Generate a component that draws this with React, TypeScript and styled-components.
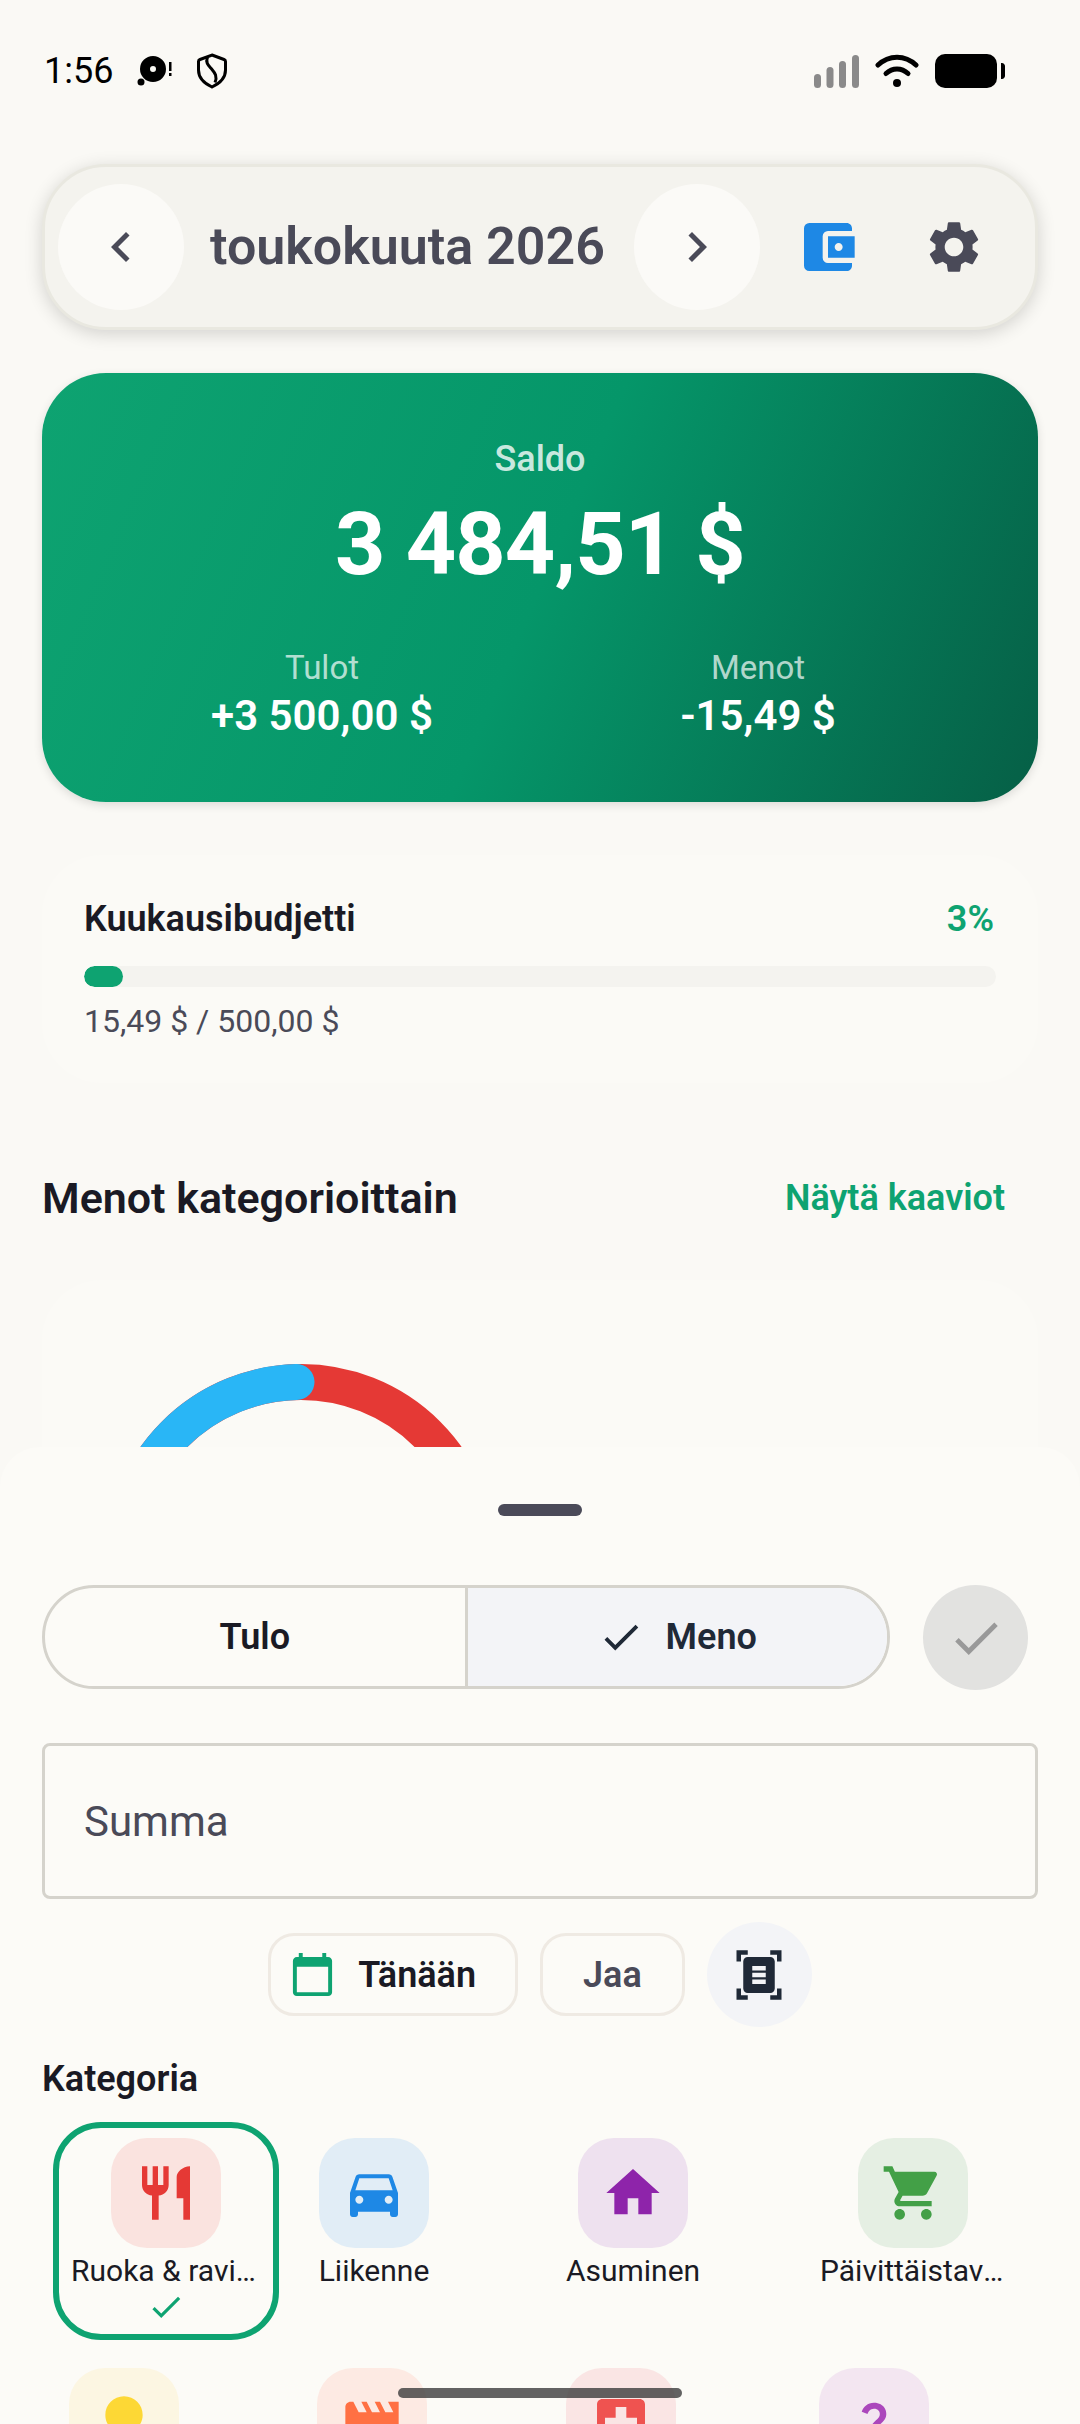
import styled, { createGlobalStyle } from 'styled-components';
import type { IconType } from 'react-icons';
import {
  MdAccountBalanceWallet,
  MdCalendarToday,
  MdCheck,
  MdChevronLeft,
  MdChevronRight,
  MdDirectionsCar,
  MdDocumentScanner,
  MdHome,
  MdLightbulb,
  MdLocalHospital,
  MdMovie,
  MdQuestionMark,
  MdRestaurant,
  MdSettings,
  MdShoppingCart,
} from 'react-icons/md';

type Category = {
  label?: string,
  icon: IconType,
  iconSize?: number,
  color: string,
  tint: string,
  width: number,
  offset: number,
  selected?: boolean,
}

const firstRow: Category[] = [
  {
    label: 'Ruoka & ravintolat', icon: MdRestaurant, color: '#e53935', tint: '#fae3df', width: 226, offset: 11, selected: true,
  },
  {
    label: 'Liikenne', icon: MdDirectionsCar, color: '#1e88e5', tint: '#e1edf6', width: 150, offset: 20,
  },
  {
    label: 'Asuminen', icon: MdHome, color: '#8e24aa', tint: '#eee1ef', width: 172, offset: 98,
  },
  {
    label: 'Päivittäistavarat', icon: MdShoppingCart, color: '#43a047', tint: '#e5efe3', width: 222, offset: 83,
  },
];

const secondRow: Category[] = [
  {
    icon: MdLightbulb, color: '#fdd835', tint: '#fcf6e2', width: 150, offset: 7,
  },
  {
    icon: MdMovie, color: '#ff7043', tint: '#fdeae3', width: 150, offset: 98,
  },
  {
    icon: MdLocalHospital, color: '#ef5350', tint: '#fae5e4', width: 150, offset: 99,
  },
  {
    icon: MdQuestionMark, iconSize: 54, color: '#ab47bc', tint: '#f3e6f1', width: 150, offset: 103,
  },
];

const GlobalStyle = createGlobalStyle`
  * {
    box-sizing: border-box;
  }
  html, body {
    margin: 0;
    padding: 0;
    background: #faf9f5;
  }
  body {
    font-family: Roboto, "Liberation Sans", sans-serif;
  }
`;

const StyledScreen = styled.div`
  position: relative;
  width: 1080px;
  height: 2424px;
  overflow: hidden;
  background: #faf9f5;
  color: #1a1a24;
`;

const StyledContent = styled.div`
  display: flex;
  flex-direction: column;
  padding: 0 42px;
`;

const StyledStatusBar = styled.div`
  display: flex;
  align-items: center;
  justify-content: space-between;
  height: 142px;
  padding: 0 33px 0 2px;
  color: #000;
`;

const StyledStatusGroup = styled.div<{ $gap: number }>`
  display: flex;
  align-items: center;
  gap: ${(props) => props.$gap}px;
`;

const StyledTime = styled.span`
  font-size: 36px;
  line-height: 40px;
`;

const StyledHeader = styled.div`
  display: flex;
  align-items: center;
  height: 166px;
  margin-top: 22px;
  padding: 0 21px 0 13px;
  background: #f4f3ee;
  border: 3px solid #e9e8e0;
  border-radius: 64px;
  box-shadow: 0 4px 18px rgba(0, 0, 0, 0.16);
`;

const StyledNavButton = styled.button`
  display: flex;
  align-items: center;
  justify-content: center;
  flex: none;
  width: 126px;
  height: 126px;
  padding: 0;
  border: none;
  border-radius: 50%;
  background: #fbfaf7;
  color: #4a4a58;
`;

const StyledMonth = styled.h1`
  flex: 1;
  margin: 0;
  padding-right: 3px;
  text-align: center;
  font-size: 52px;
  line-height: 60px;
  font-weight: 600;
  color: #4a4a58;
  white-space: nowrap;
`;

const StyledIconButton = styled.button<{ $color: string }>`
  display: flex;
  align-items: center;
  justify-content: center;
  flex: none;
  width: 120px;
  height: 120px;
  padding: 0;
  border: none;
  background: none;
  color: ${(props) => props.$color};
`;

const StyledHeaderActions = styled.div`
  display: flex;
  gap: 6px;
  margin-left: 8px;
`;

const StyledBalanceCard = styled.section`
  height: 429px;
  margin-top: 43px;
  padding-top: 64px;
  border-radius: 64px;
  background: linear-gradient(113deg, #0ea371 0%, #059669 50%, #065f46 100%);
  box-shadow: 0 3px 10px rgba(0, 0, 0, 0.12);
  color: #fff;
  text-align: center;
`;

const StyledBalanceLabel = styled.div`
  font-size: 36px;
  line-height: 44px;
  font-weight: 500;
  color: rgba(255, 255, 255, 0.8);
`;

const StyledBalanceAmount = styled.div`
  margin-top: 13px;
  font-size: 88px;
  line-height: 100px;
  font-weight: 700;
  letter-spacing: -0.9px;
`;

const StyledTotals = styled.div`
  display: grid;
  grid-template-columns: 436px 436px;
  justify-content: center;
  margin-top: 56px;
`;

const StyledTotalLabel = styled.div`
  font-size: 33px;
  line-height: 36px;
  color: rgba(255, 255, 255, 0.7);
`;

const StyledTotalValue = styled.div`
  margin-top: 6px;
  font-size: 42px;
  line-height: 48px;
  font-weight: 600;
`;

const StyledBudgetCard = styled.section`
  height: 228px;
  margin-top: 53px;
  padding: 43px 42px 0;
  border-radius: 60px;
  background: #fbfaf6;
`;

const StyledBudgetHead = styled.div`
  display: flex;
  justify-content: space-between;
  padding-right: 2px;
  font-size: 36px;
  line-height: 42px;
  font-weight: 600;
`;

const StyledPercent = styled.span`
  color: #0ea371;
`;

const StyledTrack = styled.div`
  height: 21px;
  margin-top: 26px;
  border-radius: 11px;
  background: #f4f3ef;
  overflow: hidden;
`;

const StyledFill = styled.div`
  height: 100%;
  border-radius: 11px;
  background: #0ea371;
`;

const StyledBudgetText = styled.div`
  margin-top: 16px;
  font-size: 32px;
  line-height: 36px;
  color: #4a4a58;
`;

const StyledSectionHead = styled.div`
  display: flex;
  align-items: center;
  justify-content: space-between;
  height: 48px;
  margin-top: 91px;
  padding-right: 33px;
`;

const StyledSectionTitle = styled.h2`
  margin: 0;
  font-size: 43px;
  font-weight: 600;
`;

const StyledLink = styled.span`
  font-size: 36px;
  font-weight: 600;
  color: #0ea371;
`;

const StyledChartCard = styled.section`
  height: 400px;
  margin-top: 58px;
  padding: 84px 0 0 62px;
  border-radius: 60px;
  background: #fbfaf6;
`;

const StyledSheet = styled.div`
  position: absolute;
  top: 1447px;
  left: 0;
  right: 0;
  bottom: 0;
  padding: 57px 42px 0;
  border-radius: 40px 40px 0 0;
  background: #fcfbf7;
  overflow: hidden;
`;

const StyledHandle = styled.div`
  width: 84px;
  height: 12px;
  margin: 0 auto;
  border-radius: 6px;
  background: #4a4a58;
`;

const StyledTypeRow = styled.div`
  display: flex;
  gap: 33px;
  margin-top: 69px;
`;

const StyledSegmented = styled.div`
  display: flex;
  width: 848px;
  height: 104px;
  border: 3px solid #d5d3cc;
  border-radius: 52px;
  overflow: hidden;
`;

const StyledSegment = styled.button<{ $active?: boolean }>`
  display: flex;
  align-items: center;
  justify-content: center;
  gap: 22px;
  flex: 1;
  padding: 0;
  border: none;
  border-left: ${(props) => (props.$active ? '3px solid #d5d3cc' : 'none')};
  background: ${(props) => (props.$active ? '#f3f4f7' : 'transparent')};
  color: ${(props) => (props.$active ? '#1f2937' : '#1a1a24')};
  font-family: inherit;
  font-size: 36px;
  font-weight: 600;
`;

const StyledConfirm = styled.button`
  display: flex;
  align-items: center;
  justify-content: center;
  width: 105px;
  height: 105px;
  padding: 0;
  border: none;
  border-radius: 50%;
  background: #e2e2e0;
  color: #999;
`;

const StyledAmountInput = styled.input`
  display: block;
  width: 100%;
  height: 156px;
  margin-top: 53px;
  padding: 0 39px;
  border: 3px solid #d5d3cc;
  border-radius: 8px;
  background: transparent;
  font-family: inherit;
  font-size: 42px;
  &::placeholder {
    color: #4a4a58;
    opacity: 1;
  }
`;

const StyledChips = styled.div`
  display: flex;
  align-items: center;
  justify-content: center;
  gap: 22px;
  height: 105px;
  margin-top: 23px;
`;

const StyledChip = styled.button<{ $muted?: boolean }>`
  display: flex;
  align-items: center;
  justify-content: center;
  gap: 22px;
  height: 83px;
  padding: ${(props) => (props.$muted ? '0 40px' : '0 39px 0 18px')};
  border: 3px solid #efeae3;
  border-radius: 26px;
  background: transparent;
  color: ${(props) => (props.$muted ? '#4a4a58' : '#1a1a24')};
  font-family: inherit;
  font-size: 36px;
  font-weight: 600;
  svg {
    color: #0ea371;
  }
`;

const StyledScanButton = styled.button`
  display: flex;
  align-items: center;
  justify-content: center;
  width: 105px;
  height: 105px;
  padding: 0;
  border: none;
  border-radius: 50%;
  background: #f3f4f7;
  color: #1f2937;
`;

const StyledCategoryTitle = styled.h3`
  margin: 30px 0 0;
  font-size: 36px;
  line-height: 44px;
  font-weight: 600;
`;

const StyledCategoryRow = styled.div<{ $top: number }>`
  display: flex;
  align-items: flex-start;
  margin-top: ${(props) => props.$top}px;
`;

const StyledCategory = styled.div<{ $width: number, $offset: number, $selected?: boolean }>`
  display: flex;
  flex-direction: column;
  align-items: center;
  flex: none;
  width: ${(props) => props.$width}px;
  margin-left: ${(props) => props.$offset}px;
  padding: 10px 12px 8px;
  border: 6px solid ${(props) => (props.$selected ? '#0ea371' : 'transparent')};
  border-radius: 48px;
  color: #0ea371;
`;

const StyledCategoryIcon = styled.div<{ $tint: string, $color: string }>`
  display: flex;
  align-items: center;
  justify-content: center;
  width: 110px;
  height: 110px;
  border-radius: 36px;
  background: ${(props) => props.$tint};
  color: ${(props) => props.$color};
`;

const StyledCategoryLabel = styled.div`
  width: 100%;
  margin-top: 6px;
  font-size: 30px;
  line-height: 34px;
  font-weight: 400;
  color: #1a1a24;
  text-align: center;
  white-space: nowrap;
  overflow: hidden;
  text-overflow: ellipsis;
`;

const StyledHomeBar = styled.div`
  position: absolute;
  left: 398px;
  bottom: 26px;
  width: 284px;
  height: 10px;
  border-radius: 5px;
  background: rgba(60, 60, 60, 0.8);
`;

function NotificationIcon() {
  return (
    <svg width="40" height="36" viewBox="0 0 40 36" fill="#000" aria-hidden="true">
      <path fillRule="evenodd" d="M18 3a13 13 0 1 1 0 26 13 13 0 0 1 0-26zm0 10a3 3 0 1 0 0 6 3 3 0 0 0 0-6z" />
      <circle cx="6" cy="29" r="3.5" />
      <rect x="34" y="9" width="2.5" height="9" />
      <rect x="34" y="20" width="2.5" height="3" />
    </svg>
  );
}

function ShieldIcon() {
  return (
    <svg width="30" height="36" viewBox="0 0 30 36" fill="none" stroke="#000" strokeWidth="3" aria-hidden="true">
      <path d="M15 2l12 4.5c1 .4 1.5 1 1.5 2V17c0 7.5-6 13.500-13.500 17C7.500 30.500 1.500 24.500 1.500 17V8.500c0-1 .5-1.600 1.500-2z" />
      <path d="M10.500 4.500C8 10 12 13 15 16.500c3 3.500 5.500 7 3 13" />
    </svg>
  );
}

function SignalIcon() {
  return (
    <svg width="45" height="33" viewBox="0 0 45 33" fill="#8a8a8a" aria-hidden="true">
      <rect x="0" y="19" width="7" height="14" rx="3.500" />
      <rect x="12.500" y="12" width="7" height="21" rx="3.500" />
      <rect x="25" y="6" width="7" height="27" rx="3.500" />
      <rect x="38" y="0" width="7" height="33" rx="3.500" />
    </svg>
  );
}

function WifiIcon() {
  return (
    <svg width="44" height="34" viewBox="0 0 44 34" fill="none" stroke="#000" strokeWidth="5" strokeLinecap="round" aria-hidden="true">
      <path d="M3 11C14 0.500 30 0.500 41 11" />
      <path d="M11 19.500C17.500 13.500 26.500 13.500 33 19.500" />
      <circle cx="22" cy="29" r="4" fill="#000" stroke="none" />
    </svg>
  );
}

function BatteryIcon() {
  return (
    <svg width="70" height="34" viewBox="0 0 70 34" fill="#000" aria-hidden="true">
      <rect x="0" y="0" width="62" height="34" rx="10" />
      <path d="M66 9h1c1.500 0 3 1.500 3 3v10c0 1.500-1.500 3-3 3h-1z" />
    </svg>
  );
}

function DonutChart() {
  return (
    <svg width="394" height="394" viewBox="0 0 394 394" fill="none" strokeWidth="36" aria-hidden="true">
      <circle cx="197" cy="197" r="179" stroke="#e53935" />
      <path d="M18 197A179 179 0 0 1 192.500 18.060" stroke="#29b6f6" strokeLinecap="round" />
    </svg>
  );
}

function CategoryItem({ category }: { category: Category }) {
  const Icon = category.icon;

  return (
    <StyledCategory
      $width={category.width}
      $offset={category.offset}
      $selected={category.selected}
    >
      <StyledCategoryIcon $tint={category.tint} $color={category.color}>
        <Icon size={category.iconSize ?? 64} />
      </StyledCategoryIcon>
      {category.label && <StyledCategoryLabel>{category.label}</StyledCategoryLabel>}
      {category.selected && <MdCheck size={38} />}
    </StyledCategory>
  );
}

export default function App() {
  return (
    <StyledScreen>
      <GlobalStyle />
      <StyledContent>
        <StyledStatusBar>
          <StyledStatusGroup $gap={22}>
            <StyledTime>1:56</StyledTime>
            <NotificationIcon />
            <ShieldIcon />
          </StyledStatusGroup>
          <StyledStatusGroup $gap={16}>
            <SignalIcon />
            <WifiIcon />
            <BatteryIcon />
          </StyledStatusGroup>
        </StyledStatusBar>

        <StyledHeader>
          <StyledNavButton><MdChevronLeft size={60} /></StyledNavButton>
          <StyledMonth>toukokuuta 2026</StyledMonth>
          <StyledNavButton><MdChevronRight size={60} /></StyledNavButton>
          <StyledHeaderActions>
            <StyledIconButton $color="#1e88e5"><MdAccountBalanceWallet size={64} /></StyledIconButton>
            <StyledIconButton $color="#4a4a58"><MdSettings size={62} /></StyledIconButton>
          </StyledHeaderActions>
        </StyledHeader>

        <StyledBalanceCard>
          <StyledBalanceLabel>Saldo</StyledBalanceLabel>
          <StyledBalanceAmount>3 484,51 $</StyledBalanceAmount>
          <StyledTotals>
            <div>
              <StyledTotalLabel>Tulot</StyledTotalLabel>
              <StyledTotalValue>+3 500,00 $</StyledTotalValue>
            </div>
            <div>
              <StyledTotalLabel>Menot</StyledTotalLabel>
              <StyledTotalValue>-15,49 $</StyledTotalValue>
            </div>
          </StyledTotals>
        </StyledBalanceCard>

        <StyledBudgetCard>
          <StyledBudgetHead>
            <span>Kuukausibudjetti</span>
            <StyledPercent>3%</StyledPercent>
          </StyledBudgetHead>
          <StyledTrack>
            <StyledFill style={{ width: `${(39 / 912) * 100}%` }} />
          </StyledTrack>
          <StyledBudgetText>15,49 $ / 500,00 $</StyledBudgetText>
        </StyledBudgetCard>

        <StyledSectionHead>
          <StyledSectionTitle>Menot kategorioittain</StyledSectionTitle>
          <StyledLink>Näytä kaaviot</StyledLink>
        </StyledSectionHead>

        <StyledChartCard>
          <DonutChart />
        </StyledChartCard>
      </StyledContent>

      <StyledSheet>
        <StyledHandle />
        <StyledTypeRow>
          <StyledSegmented>
            <StyledSegment>Tulo</StyledSegment>
            <StyledSegment $active>
              <MdCheck size={46} />
              Meno
            </StyledSegment>
          </StyledSegmented>
          <StyledConfirm><MdCheck size={58} /></StyledConfirm>
        </StyledTypeRow>

        <StyledAmountInput placeholder="Summa" />

        <StyledChips>
          <StyledChip>
            <MdCalendarToday size={47} />
            Tänään
          </StyledChip>
          <StyledChip $muted>Jaa</StyledChip>
          <StyledScanButton><MdDocumentScanner size={54} /></StyledScanButton>
        </StyledChips>

        <StyledCategoryTitle>Kategoria</StyledCategoryTitle>
        <StyledCategoryRow $top={21}>
          {firstRow.map((category) => (
            <CategoryItem key={category.color} category={category} />
          ))}
        </StyledCategoryRow>
        <StyledCategoryRow $top={12}>
          {secondRow.map((category) => (
            <CategoryItem key={category.color} category={category} />
          ))}
        </StyledCategoryRow>
      </StyledSheet>

      <StyledHomeBar />
    </StyledScreen>
  );
}
